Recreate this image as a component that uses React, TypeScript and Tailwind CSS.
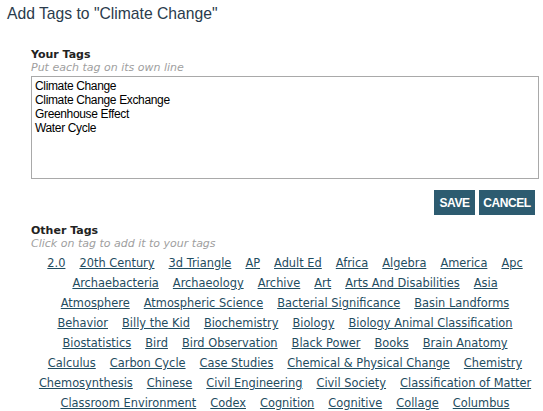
import React from 'react';

const ROWS: string[][] = [
  ['2.0', '20th Century', '3d Triangle', 'AP', 'Adult Ed', 'Africa', 'Algebra', 'America', 'Apc'],
  ['Archaebacteria', 'Archaeology', 'Archive', 'Art', 'Arts And Disabilities', 'Asia'],
  ['Atmosphere', 'Atmospheric Science', 'Bacterial Significance', 'Basin Landforms'],
  ['Behavior', 'Billy the Kid', 'Biochemistry', 'Biology', 'Biology Animal Classification'],
  ['Biostatistics', 'Bird', 'Bird Observation', 'Black Power', 'Books', 'Brain Anatomy'],
  ['Calculus', 'Carbon Cycle', 'Case Studies', 'Chemical & Physical Change', 'Chemistry'],
  ['Chemosynthesis', 'Chinese', 'Civil Engineering', 'Civil Society', 'Classification of Matter'],
  ['Classroom Environment', 'Codex', 'Cognition', 'Cognitive', 'Collage', 'Columbus'],
];

const YOUR_TAGS = 'Climate Change\nClimate Change Exchange\nGreenhouse Effect\nWater Cycle';

const App: React.FC = () => {
  return (
    <div className="w-[543px] h-[411px] bg-white overflow-hidden font-['DejaVu_Sans',sans-serif]">
      <h1 className="pl-[7px] pt-[4px] text-[15.7px] leading-[20px] text-[#2a3b4c] font-['Liberation_Sans',sans-serif]">
        Add Tags to "Climate Change"
      </h1>

      <div className="ml-[31px] mr-[4px] mt-[24px]">
        <div className="text-[11px] leading-[13px] font-bold text-[#222]">Your Tags</div>
        <div className="text-[11px] leading-[13px] italic text-[#a0a0a0]">Put each tag on its own line</div>
        <textarea
          defaultValue={YOUR_TAGS}
          className="mt-[2px] block w-full h-[103px] resize-none border border-[#a9a9a9] px-[3px] pt-[2px] text-[12px] tracking-[-0.35px] leading-[14px] text-black font-['Liberation_Sans',sans-serif] outline-none"
        />

        <div className="flex justify-end gap-[4px] mt-[11px] mr-[4px]">
          <button className="h-[25px] w-[41px] bg-[#2d5b70] text-white text-[12px] tracking-[-0.4px] font-bold font-['Liberation_Sans',sans-serif]">SAVE</button>
          <button className="h-[25px] w-[56px] bg-[#2d5b70] text-white text-[12px] tracking-[-0.4px] font-bold font-['Liberation_Sans',sans-serif]">CANCEL</button>
        </div>

        <div className="mt-[9px] text-[11px] leading-[13px] font-bold text-[#222]">Other Tags</div>
        <div className="text-[11px] leading-[13px] italic text-[#a0a0a0]">Click on tag to add it to your tags</div>

        <div className="mt-[3px] flex flex-col">
          {ROWS.map((row, i) => (
            <div key={i} className="flex justify-center gap-[14px] h-[20px] items-center">
              {row.map((tag) => (
                <a key={tag} href="#" className="text-[11.4px] leading-[14px] text-[#1f4d61] underline">
                  {tag}
                </a>
              ))}
            </div>
          ))}
        </div>
      </div>
    </div>
  );
};

export default App;
